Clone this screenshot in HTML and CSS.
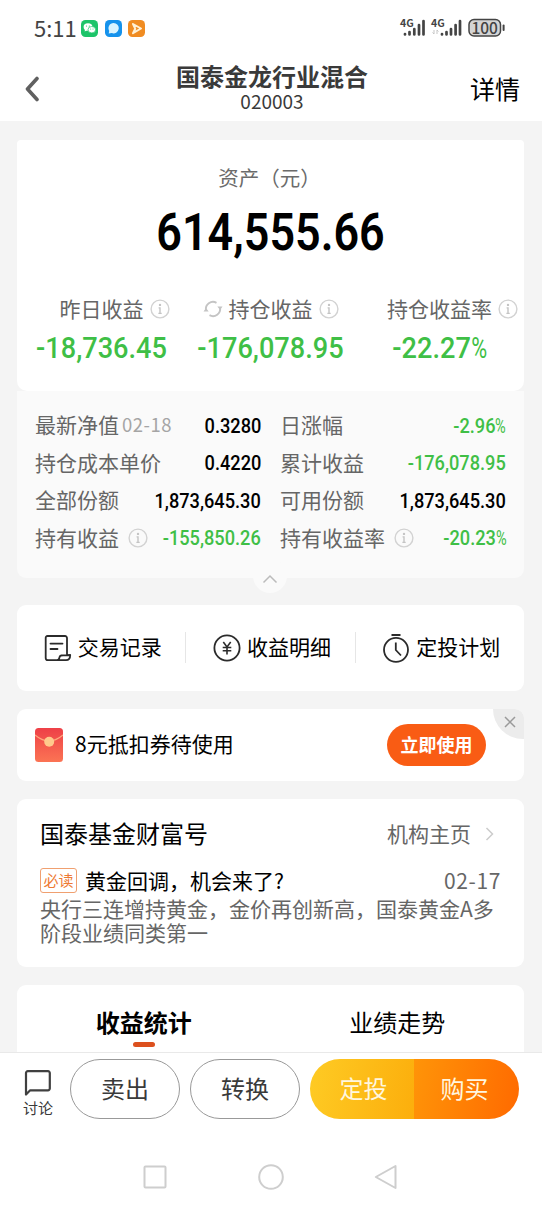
FILE: index.html
```html
<!DOCTYPE html>
<html lang="zh-CN">

<head>
  <meta charset="utf-8">
  <title>国泰金龙行业混合</title>
  <meta name="viewport" content="width=device-width, initial-scale=1.0">
  <link rel="stylesheet" href="styles.css">
</head>

<body>
  <svg width="0" height="0" class="symbols">
    <symbol id="info" viewBox="0 0 20 20">
      <circle cx="10" cy="10" r="8.9" fill="none" stroke="#d2d2d2" stroke-width="1.4" />
      <circle cx="10" cy="5.9" r="1.2" fill="#c4c4c4" />
      <path d="M8.6 8.900H10V14.400M8.400 14.400H11.700" fill="none" stroke="#c4c4c4" stroke-width="1.400" />
    </symbol>
  </svg>

  <div class="status">
    <span class="time">5:11</span>
    <svg class="app" viewBox="0 0 17 17">
      <rect width="17" height="17" rx="4.5" fill="#1dc469" />
      <ellipse cx="7" cy="7" rx="4.4" ry="3.7" fill="#fff" />
      <path d="M4 9l-.3 2.6L6.5 10z" fill="#fff" />
      <ellipse cx="10.8" cy="9.7" rx="3.8" ry="3.2" fill="#fff" stroke="#1dc469" stroke-width=".7" />
      <g fill="#1dc469"><circle cx="5.5" cy="6" r=".6" /><circle cx="8.3" cy="6" r=".6" /><circle cx="9.7" cy="9" r=".5" /><circle cx="12" cy="9" r=".5" /></g>
    </svg>
    <svg class="app" viewBox="0 0 17 17">
      <rect width="17" height="17" rx="4.5" fill="#1592ec" />
      <path d="M8.5 3a5.2 5.2 0 1 1-1.7 10.1L3.700 13.500l.5-2.600A5.200 5.200 0 0 1 8.500 3z" fill="#d9f4ff" />
    </svg>
    <svg class="app" viewBox="0 0 17 17">
      <rect width="17" height="17" rx="4.5" fill="#f08c22" />
      <path d="M5 4l8 4.5-8 4.7 2.200-4.500z" fill="none" stroke="#fff1d6" stroke-width="2" stroke-linejoin="round" />
    </svg>
    <svg class="signal" viewBox="0 0 106 22">
      <g class="net"><text x="0" y="9.500">4G</text><text x="31" y="9.500">4G</text></g>
      <g stroke="#444" stroke-width="2.7" stroke-linecap="round">
        <path d="M5 17v.5M9.500 15v2.500M14.300 12v5.500M19 8v9.500M23.500 4v13.500" />
        <path d="M42 17v.5M46.500 15v2.500M51 12v5.500M55.600 8v9.500M60 4v13.500" />
      </g>
      <path d="M34 13v4l-1.500-1.500M37 17v-4l1.500 1.500" fill="none" stroke="#c5c5c5" />
      <rect x="69" y="2.500" width="31.500" height="16.500" rx="5" fill="#d5d5d5" stroke="#444" stroke-width="1.500" />
      <path d="M103.600 8.500v4.500" stroke="#444" stroke-width="2" stroke-linecap="round" />
      <text class="battery" x="84.700" y="16.500">100</text>
    </svg>
  </div>

  <div class="header">
    <svg class="back" width="16" height="26" viewBox="0 0 16 26">
      <path d="M13 2.500L3.500 13l9.500 10.500" fill="none" stroke="#606060" stroke-width="3.600" stroke-linecap="round" stroke-linejoin="round" />
    </svg>
    <div class="title">
      <h1>国泰金龙行业混合</h1>
      <div class="code">020003</div>
    </div>
    <div class="detail-link">详情</div>
  </div>

  <div class="content">
    <div class="asset">
      <div class="asset-label">资产（元）</div>
      <div class="asset-total">614,555.66</div>
      <div class="metrics">
        <div class="metric">
          <div class="metric-name spaced"><span>昨日收益</span><svg class="info"><use href="#info" /></svg></div>
          <div class="metric-value">-18,736.45</div>
        </div>
        <div class="metric">
          <div class="metric-name">
            <svg class="refresh" viewBox="0 0 20 20" fill="none" stroke="#c4c4c4" stroke-width="1.900">
              <path d="M3 11.500A7.200 7.200 0 0 1 13.500 3.800M17 8.500A7.200 7.200 0 0 1 6.500 16.200" />
              <path d="M.5 12.500h5.200L3 9zM19.500 7.500h-5.200l2.900 3.500z" fill="#c4c4c4" stroke="none" />
            </svg><span>持仓收益</span><svg class="info"><use href="#info" /></svg>
          </div>
          <div class="metric-value">-176,078.95</div>
        </div>
        <div class="metric">
          <div class="metric-name spaced"><span>持仓收益率</span><svg class="info"><use href="#info" /></svg></div>
          <div class="metric-value">-22.27<span class="percent">%</span></div>
        </div>
      </div>
    </div>
    <div class="details">
      <div class="row"><span>最新净值<small>02-18</small></span><b>0.3280</b></div>
      <div class="row"><span>日涨幅</span><b class="down">-2.96<span class="percent">%</span></b></div>
      <div class="row"><span>持仓成本单价</span><b>0.4220</b></div>
      <div class="row"><span>累计收益</span><b class="down">-176,078.95</b></div>
      <div class="row"><span>全部份额</span><b>1,873,645.30</b></div>
      <div class="row"><span>可用份额</span><b>1,873,645.30</b></div>
      <div class="row"><span>持有收益<svg class="info"><use href="#info" /></svg></span><b class="down">-155,850.26</b></div>
      <div class="row"><span>持有收益率<svg class="info"><use href="#info" /></svg></span><b class="down">-20.23<span class="percent">%</span></b></div>
      <div class="fold">
        <svg width="16" height="10" viewBox="0 0 16 10"><path d="M1.500 8.500L8 2l6.500 6.500" fill="none" stroke="#bbb" stroke-width="1.500" /></svg>
      </div>
    </div>

    <div class="card links">
      <div class="link">
        <svg width="28" height="28" viewBox="0 0 28 28" fill="none" stroke="#2b2b2b" stroke-width="1.800" stroke-linejoin="round" stroke-linecap="round">
          <path d="M23 20V4a2 2 0 0 0-2-2H3.500A1.800 1.800 0 0 0 1.700 4v20a2.200 2.200 0 0 0 2.200 2.200H22c3 0 4.200-2 4.200-5.200-3 0-5 .2-9 .5-1.500.2-1.500 1-1.800 2.200-.2 1.500-.8 2.500-2.500 2.500M6.500 9.600h12M6.500 15h7" />
        </svg><span>交易记录</span>
      </div>
      <div class="link">
        <svg width="28" height="28" viewBox="0 0 28 28" fill="none" stroke="#2b2b2b" stroke-width="1.800">
          <circle cx="14" cy="14" r="12.600" />
          <path d="M10.300 8l3.700 5 3.700-5M9.700 13.500h8.600M9.700 16.800h8.600M14 13v7.500" stroke-width="1.600" />
        </svg><span>收益明细</span>
      </div>
      <div class="link">
        <svg width="28" height="30" viewBox="0 0 28 30" fill="none" stroke="#2b2b2b" stroke-width="1.800">
          <circle cx="14" cy="16.800" r="12" />
          <path d="M9.500 2h9M13.800 9.500v7.500l5.200 5.500" />
        </svg><span>定投计划</span>
      </div>
    </div>

    <div class="card coupon">
      <svg width="28" height="34" viewBox="0 0 28 34">
        <defs>
          <linearGradient id="red" x1="0" y1="0" x2="0" y2="1"><stop offset="0" stop-color="#ee4047" /><stop offset="1" stop-color="#fb7454" /></linearGradient>
        </defs>
        <rect width="28" height="34" rx="3.500" fill="url(#red)" />
        <path d="M0 7q14 12 28 0" fill="none" stroke="#ffa77c" stroke-width="1.200" />
        <circle cx="14.200" cy="13.700" r="5" fill="#ffc98c" />
      </svg>
      <span class="coupon-text">8元抵扣券待使用</span>
      <div class="use">立即使用</div>
      <div class="close">
        <svg width="12" height="12" viewBox="0 0 12 12"><path d="M1 1l10 10M11 1L1 11" stroke="#9a9a9a" stroke-width="1.500" /></svg>
      </div>
    </div>

    <div class="card news">
      <div class="news-head">
        <h2>国泰基金财富号</h2>
        <span class="home">机构主页</span>
        <svg width="9" height="14" viewBox="0 0 9 14"><path d="M1.500 1l6 6-6 6" fill="none" stroke="#ccc" stroke-width="1.500" /></svg>
      </div>
      <div class="news-title">
        <span class="tag">必读</span>
        <span class="headline">黄金回调，机会来了?</span>
        <span class="date">02-17</span>
      </div>
      <p>央行三连增持黄金，金价再创新高，国泰黄金A多阶段业绩同类第一</p>
    </div>

    <div class="card tabs">
      <div class="tab active">收益统计</div>
      <div class="tab">业绩走势</div>
    </div>
  </div>

  <div class="actions">
    <div class="discuss">
      <svg width="28" height="28" viewBox="0 0 28 28"><path d="M2 25.500V4a1.800 1.800 0 0 1 1.800-1.800H24A1.800 1.800 0 0 1 25.800 4v15.500a1.800 1.800 0 0 1-1.800 1.800H6.200z" fill="none" stroke="#404040" stroke-width="2.200" stroke-linejoin="round" /></svg>
      讨论
    </div>
    <div class="pill">卖出</div>
    <div class="pill">转换</div>
    <div class="buy">
      <div class="plan">定投</div>
      <div class="now">购买</div>
    </div>
  </div>

  <div class="navbar">
    <svg width="24" height="26" viewBox="0 0 24 26"><rect x="1.500" y="2.500" width="21" height="21" rx="1" /></svg>
    <svg width="26" height="26" viewBox="0 0 26 26"><circle cx="13" cy="13" r="11.800" /></svg>
    <svg width="24" height="26" viewBox="0 0 24 26"><path d="M21.500 2v22L1.800 13z" /></svg>
  </div>
</body>

</html>
```
FILE: styles.css
```css
* {
  box-sizing: border-box;
}

body {
  margin: 0;
  width: 542px;
  height: 1206px;
  overflow: hidden;
  display: flex;
  flex-direction: column;
  background: #fff;
  color: #000;
  font-family: "Noto Sans CJK SC", sans-serif;
  font-size: 21px;
  white-space: nowrap;
}

svg {
  flex: none;
}

h1,
h2,
p {
  margin: 0;
}

.symbols {
  display: none;
}

/* status bar */
.status {
  display: flex;
  align-items: center;
  height: 56px;
  padding: 0 36px 0 34px;
}

.time {
  width: 47px;
  padding-bottom: 2px;
  font-size: 22px;
  color: #444;
}

.app {
  width: 17px;
  height: 17px;
  margin-right: 6.5px;
}

.signal {
  width: 106px;
  height: 22px;
  margin-left: auto;
  overflow: visible;
}

.net {
  font: bold 10.5px "Noto Sans CJK SC", sans-serif;
  fill: #444;
}

.battery {
  font: 500 15.5px "Noto Sans CJK SC", sans-serif;
  fill: #444;
  text-anchor: middle;
}

/* header */
.header {
  display: grid;
  grid-template-columns: 100px 1fr 100px;
  height: 65px;
  padding: 0 22px 0 24px;
}

.back {
  margin-top: 20px;
}

.title {
  text-align: center;
  color: #3a3a3a;
}

.title h1 {
  margin-top: 6px;
  font-size: 24px;
  line-height: 28px;
}

.code {
  font-size: 19px;
  line-height: 22px;
}

.detail-link {
  margin-top: 13px;
  font-size: 25px;
  line-height: 38px;
  text-align: right;
}

/* scrolling part */
.content {
  height: 931px;
  padding: 19px 18px 0 17px;
  overflow: hidden;
  background: #f4f4f4;
}

.asset {
  height: 251px;
  padding-top: 21px;
  border-radius: 4px 4px 10px 10px;
  background: #fff;
  text-align: center;
}

.asset-label {
  font-size: 20.5px;
  line-height: 32px;
  color: #6b6b6b;
  padding-right: 2px;
}

/* narrow digits */
.asset-total {
  margin-top: 11px;
  font: 600 51px/58px Roboto, sans-serif;
  transform: scaleX(.88);
}

.metrics {
  display: grid;
  grid-template-columns: repeat(3, 1fr);
  margin-top: 30px;
}

.metric-name {
  display: flex;
  align-items: center;
  justify-content: center;
  height: 34px;
  color: #666;
}

.metric-name span {
  padding-bottom: 3px;
}

.spaced {
  padding-left: 26px;
}

.info {
  width: 20px;
  height: 20px;
  margin-left: 6px;
}

.refresh {
  width: 20px;
  height: 20px;
  margin-right: 6px;
}

.metric-value {
  margin-top: 4px;
  font: 500 29.5px/36px Roboto, sans-serif;
  color: #3fbf46;
  transform: scaleX(.92);
}

.percent {
  display: inline-block;
  font-weight: 400;
  transform: scaleX(.8);
  transform-origin: left;
  margin-right: -.15em;
}

.details {
  position: relative;
  display: grid;
  grid-template-columns: 226px 226px;
  grid-auto-rows: 37.5px;
  column-gap: 19px;
  height: 187px;
  padding: 16px 18px 0;
  border-radius: 0 0 9px 9px;
  background: #fafafa;
}

.row {
  display: flex;
  align-items: center;
  justify-content: space-between;
  color: #666;
}

.row > span {
  display: flex;
  align-items: center;
  margin-top: -3px;
}

.row small {
  margin-left: 3px;
  font-size: 18.5px;
  letter-spacing: .5px;
  color: #a5a5a5;
}

.row .info {
  margin: 3px 0 0 9px;
}

.row b {
  font: 500 20px/30px Roboto, sans-serif;
  color: #000;
  transform: scaleX(.91);
  transform-origin: right;
}

.row b.down {
  color: #3fbf46;
}

.fold {
  position: absolute;
  left: 236px;
  bottom: -15px;
  display: flex;
  align-items: center;
  justify-content: center;
  width: 34px;
  height: 34px;
  padding-top: 6px;
  border-radius: 50%;
  background: #fafafa;
}

.card {
  border-radius: 9px;
  background: #fff;
}

.links {
  display: flex;
  align-items: center;
  height: 85.5px;
  margin-top: 27px;
}

.link {
  display: flex;
  flex: 1;
  align-items: center;
  justify-content: center;
  gap: 6px;
  height: 31px;
  padding-left: 3px;
}

.link span {
  padding-bottom: 3px;
}

.link + .link {
  border-left: 1px solid #e6e6e6;
}

.coupon {
  position: relative;
  display: flex;
  align-items: center;
  height: 72px;
  margin-top: 18px;
  padding: 0 38px 0 18px;
  overflow: hidden;
}

.coupon-text {
  margin-left: 12px;
  padding-bottom: 3px;
}

.use {
  width: 99px;
  height: 42px;
  margin-left: auto;
  border-radius: 21px;
  background: #f95c14;
  color: #fff;
  font-size: 18px;
  font-weight: bold;
  line-height: 40px;
  text-align: center;
}

.close {
  position: absolute;
  top: 0;
  right: 0;
  width: 31px;
  height: 30px;
  padding: 7px 0 0 11px;
  border-bottom-left-radius: 30px;
  background: #ececec;
  line-height: 0;
}

.news {
  height: 168.5px;
  margin-top: 18px;
  padding: 17px 23px 0;
}

.news-head {
  display: flex;
  align-items: center;
  height: 34px;
  padding-right: 7px;
}

.news-head svg {
  margin-top: 3px;
}

.news h2 {
  font-size: 24px;
  font-weight: 400;
}

.home {
  margin: 0 14px 0 auto;
  color: #666;
}

.news-title {
  display: flex;
  align-items: center;
  height: 30px;
  margin-top: 15px;
}

.tag {
  width: 37px;
  height: 25px;
  margin-top: 2px;
  border: 1px solid #f0a070;
  border-radius: 3px;
  font-size: 15px;
  line-height: 21px;
  text-align: center;
  color: #ee7a34;
}

.headline {
  margin-left: 8px;
}

.date {
  margin-left: auto;
  font-size: 21px;
  letter-spacing: .6px;
  color: #666;
}

.news p {
  margin-top: 1px;
  font-size: 21px;
  line-height: 24px;
  color: #666;
  white-space: normal;
}

.tabs {
  display: flex;
  height: 80px;
  margin-top: 18px;
}

.tab {
  flex: 1;
  padding-top: 19px;
  font-size: 24px;
  line-height: 36px;
  text-align: center;
}

.active {
  font-weight: bold;
}

.active::after {
  content: "";
  display: block;
  width: 22px;
  height: 5px;
  margin: 2px auto 0;
  border-radius: 3px;
  background: #dc501e;
}

/* bottom bar */
.actions {
  display: flex;
  height: 85px;
  padding: 6px 23px 0 20px;
  border-top: 1px solid #e9e9e9;
}

.discuss {
  display: flex;
  flex-direction: column;
  align-items: center;
  width: 36px;
  margin-right: 14px;
  padding-top: 10px;
  font-size: 15px;
  line-height: 21px;
  color: #3a3a3a;
}

.pill {
  width: 110px;
  height: 60px;
  margin-right: 10px;
  border: 1px solid #999;
  border-radius: 30px;
  color: #3a3a3a;
  font-size: 24px;
  line-height: 55px;
  text-align: center;
}

.buy {
  display: flex;
  width: 209px;
  height: 60px;
  border-radius: 30px;
  overflow: hidden;
  color: #fff6df;
  font-size: 24px;
  line-height: 57px;
  text-align: center;
}

.plan {
  width: 104px;
  padding-left: 3px;
  background: linear-gradient(100deg, #fecb24, #fcae0c);
}

.now {
  width: 105px;
  padding-right: 4px;
  background: linear-gradient(100deg, #ff9408, #ff6a00);
}

.navbar {
  display: flex;
  justify-content: space-between;
  height: 69px;
  padding: 27px 144px 0 143px;
}

.navbar svg {
  fill: none;
  stroke: #cecece;
  stroke-width: 2;
  stroke-linejoin: round;
}
```
